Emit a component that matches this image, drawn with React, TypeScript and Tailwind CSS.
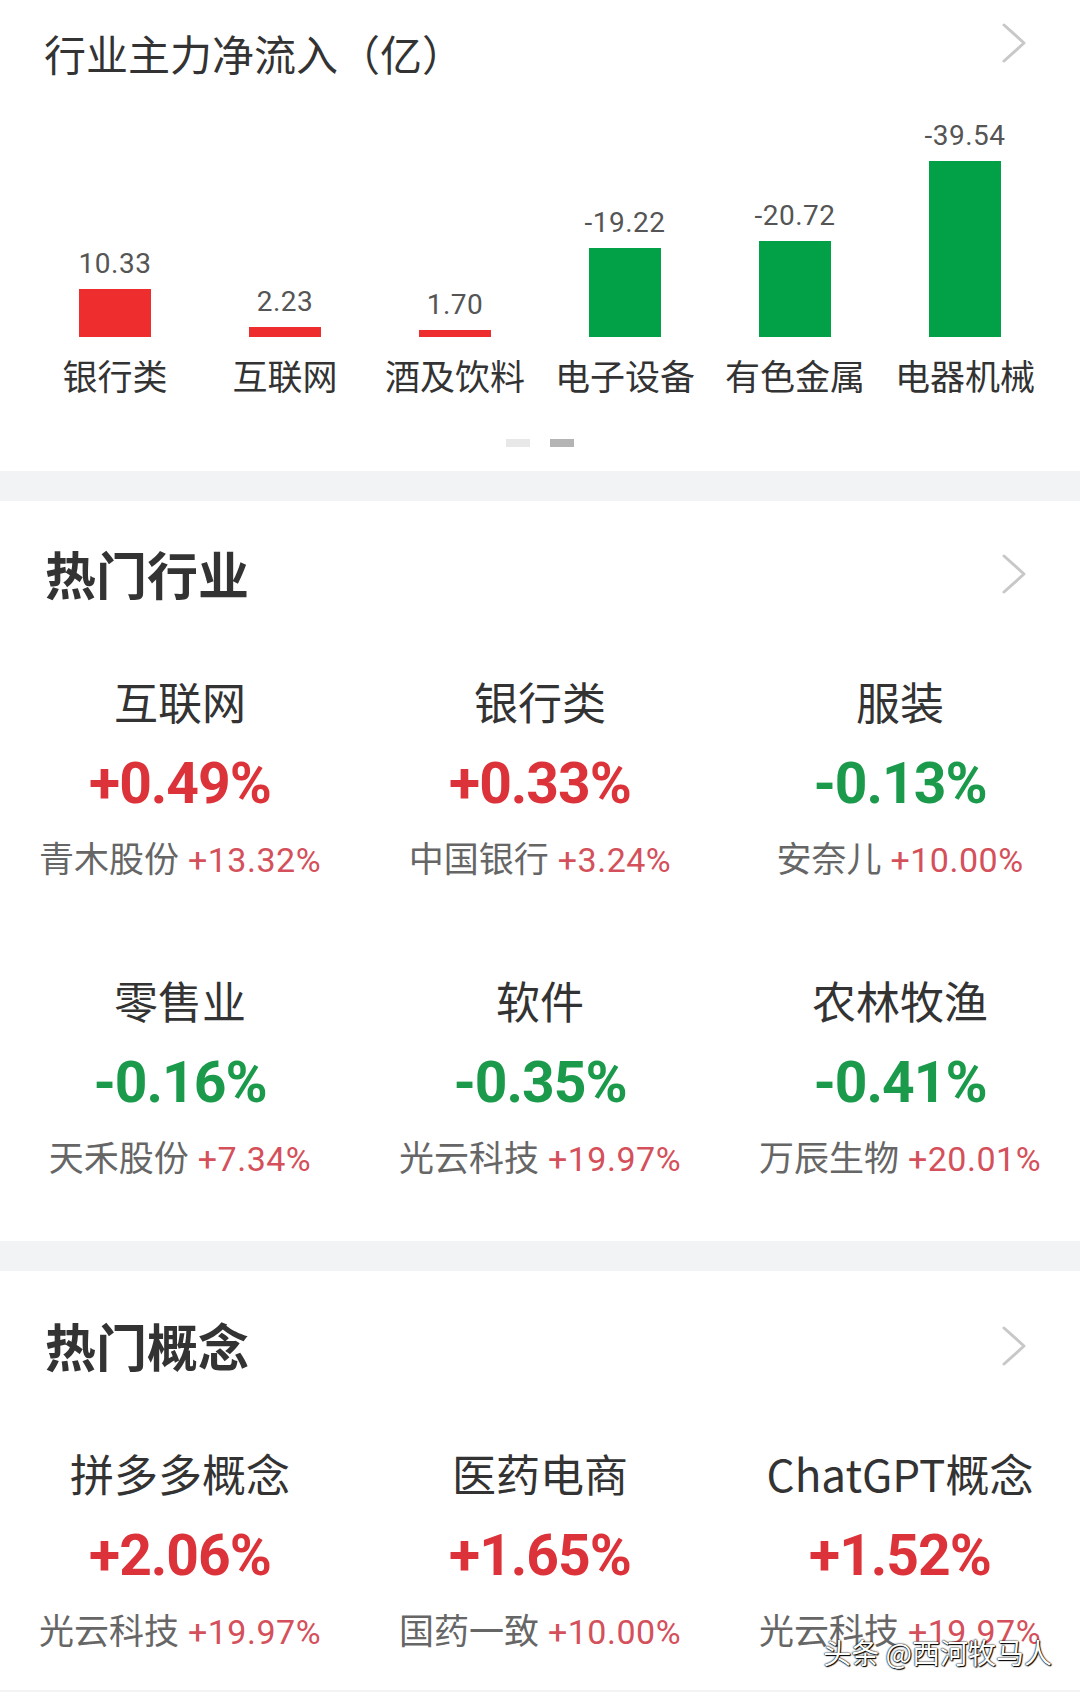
import React from "react";

type Flow = { name: string; value: string; h: number; up: boolean };

const flows: Flow[] = [
  { name: "银行类", value: "10.33", h: 48, up: true },
  { name: "互联网", value: "2.23", h: 10, up: true },
  { name: "酒及饮料", value: "1.70", h: 7, up: true },
  { name: "电子设备", value: "-19.22", h: 89, up: false },
  { name: "有色金属", value: "-20.72", h: 96, up: false },
  { name: "电器机械", value: "-39.54", h: 176, up: false },
];

type Hot = { name: string; pct: string; stock: string; stockPct: string };

const industries: Hot[] = [
  { name: "互联网", pct: "+0.49%", stock: "青木股份", stockPct: "+13.32%" },
  { name: "银行类", pct: "+0.33%", stock: "中国银行", stockPct: "+3.24%" },
  { name: "服装", pct: "-0.13%", stock: "安奈儿", stockPct: "+10.00%" },
  { name: "零售业", pct: "-0.16%", stock: "天禾股份", stockPct: "+7.34%" },
  { name: "软件", pct: "-0.35%", stock: "光云科技", stockPct: "+19.97%" },
  { name: "农林牧渔", pct: "-0.41%", stock: "万辰生物", stockPct: "+20.01%" },
];

const concepts: Hot[] = [
  { name: "拼多多概念", pct: "+2.06%", stock: "光云科技", stockPct: "+19.97%" },
  { name: "医药电商", pct: "+1.65%", stock: "国药一致", stockPct: "+10.00%" },
  { name: "ChatGPT概念", pct: "+1.52%", stock: "光云科技", stockPct: "+19.97%" },
];

function Chevron() {
  return (
    <svg
      width="24"
      height="40"
      viewBox="0 0 24 40"
      fill="none"
      stroke="#c8c8c8"
      strokeWidth="3"
      strokeLinecap="round"
      strokeLinejoin="round"
    >
      <polyline points="2,2 22,20 2,38" />
    </svg>
  );
}

function HotItem({ item }: { item: Hot }) {
  const up = item.pct.startsWith("+");
  return (
    <div className="flex flex-col items-center">
      <div className="text-[44px] leading-none text-[#333]">{item.name}</div>
      <div
        className={`mt-[32px] font-[Roboto,sans-serif] text-[57px] font-bold leading-none tracking-[-1px] ${
          up ? "text-[#dc3239]" : "text-[#1b9a4c]"
        }`}
      >
        {item.pct}
      </div>
      <div className="mt-[27px] flex items-baseline text-[35px] leading-[35px] text-[#666]">
        <span>{item.stock}</span>
        <span className="ml-[9px] font-[Roboto,sans-serif] text-[34px] tracking-[0.5px] text-[#d4505a]">
          {item.stockPct}
        </span>
      </div>
    </div>
  );
}

function SectionHeader({ title, top }: { title: string; top: string }) {
  return (
    <div className={`flex items-center justify-between pl-[45px] pr-[54px] ${top}`}>
      <h2 className="text-[51px] font-bold leading-none text-[#333]">{title}</h2>
      <Chevron />
    </div>
  );
}

export default function App() {
  return (
    <div className="relative h-[1692px] w-[1080px] overflow-hidden bg-white font-['Noto_Sans_CJK_SC',sans-serif]">
      {/* main capital net inflow */}
      <section className="h-[471px]">
        <div className="flex items-start justify-between pl-[44px] pr-[54px] pt-[23px]">
          <h1 className="mt-[9px] text-[42px] leading-none text-[#333]">
            行业主力净流入（亿）
          </h1>
          <Chevron />
        </div>

        <div className="mt-[37px] flex h-[226px] items-end px-[30px]">
          {flows.map((f) => (
            <div key={f.name} className="flex w-[170px] flex-col items-center">
              <span className="mb-[11px] font-[Roboto,sans-serif] text-[28px] leading-none tracking-[0.5px] text-[#555]">
                {f.value}
              </span>
              <div
                className={`w-[72px] ${f.up ? "bg-[#ee2e2e]" : "bg-[#02a047]"}`}
                style={{ height: f.h }}
              />
            </div>
          ))}
        </div>

        <div className="mt-[20px] flex px-[30px]">
          {flows.map((f) => (
            <div
              key={f.name}
              className="w-[170px] text-center text-[35px] leading-none text-[#333]"
            >
              {f.name}
            </div>
          ))}
        </div>

        <div className="mt-[47px] flex justify-center gap-[20px]">
          <span className="h-[8px] w-[24px] bg-[#e8e8e8]" />
          <span className="h-[8px] w-[24px] bg-[#b4b4b4]" />
        </div>
      </section>

      <div className="h-[30px] bg-[#f2f3f5]" />

      <section className="h-[740px]">
        <SectionHeader title="热门行业" top="pt-[47px]" />
        <div className="mt-[80px] grid grid-cols-3 gap-y-[100px]">
          {industries.map((it) => (
            <HotItem key={it.name} item={it} />
          ))}
        </div>
      </section>

      <div className="h-[30px] bg-[#f2f3f5]" />

      <section className="h-[419px]">
        <SectionHeader title="热门概念" top="pt-[49px]" />
        <div className="mt-[80px] grid grid-cols-3">
          {concepts.map((it) => (
            <HotItem key={it.name} item={it} />
          ))}
        </div>
      </section>

      <div className="h-[2px] bg-[#f2f3f5]" />

      <div className="absolute bottom-[26px] right-[28px] text-[28px] leading-none text-white [text-shadow:0_0_2px_#000,0_0_1px_#000,1px_1px_1px_#000]">
        头条 @西河牧马人
      </div>
    </div>
  );
}
